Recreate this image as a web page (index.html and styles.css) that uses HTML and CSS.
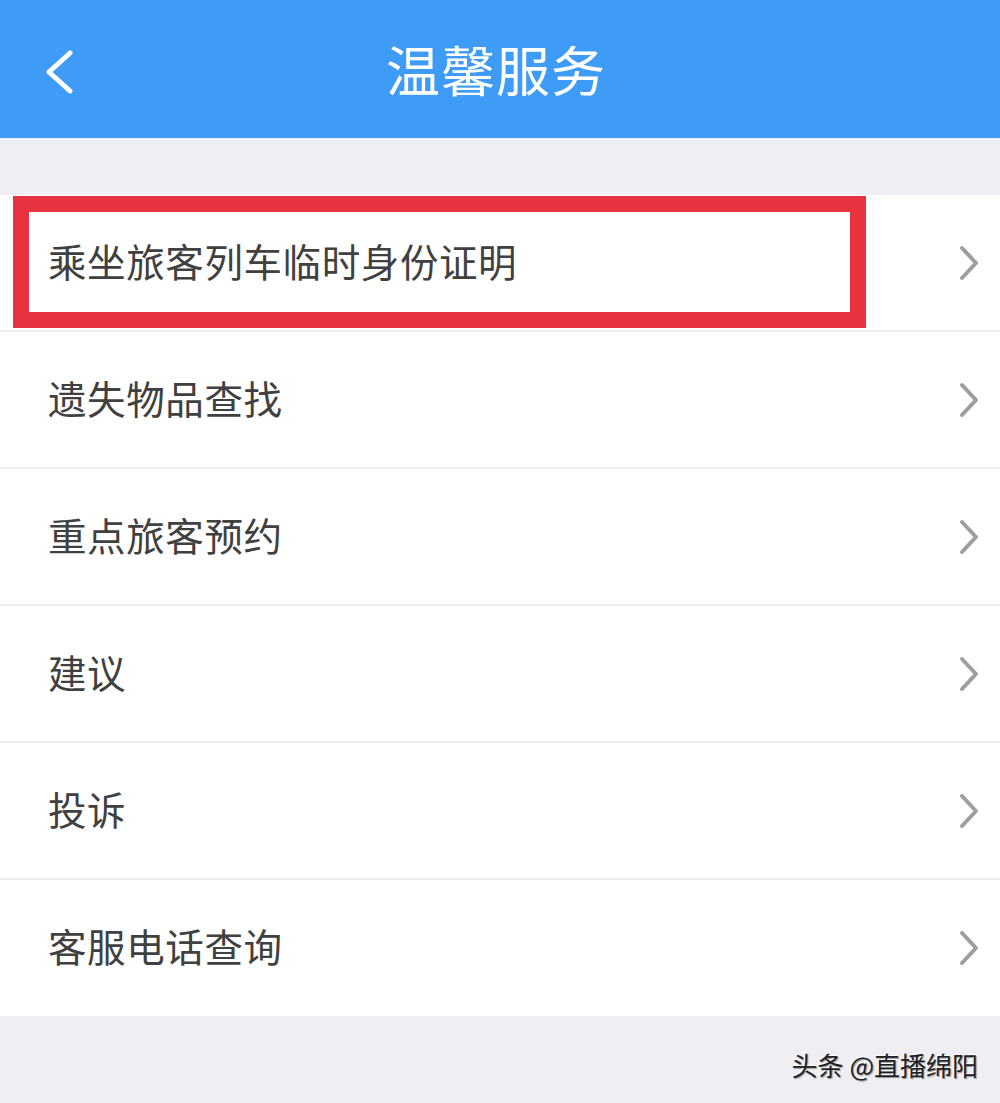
FILE: index.html
```html
<!DOCTYPE html>
<html lang="zh-CN">
<head>
<meta charset="utf-8">
<title>温馨服务</title>
<link rel="stylesheet" href="styles.css">
</head>
<body>
<div class="page">
  <header class="topbar">
    <svg class="back" viewBox="0 0 30 44" width="30" height="44" aria-hidden="true">
      <path d="M26 3 L5 22 L26 41" fill="none" stroke="#fff" stroke-width="5" stroke-linecap="round" stroke-linejoin="round"/>
    </svg>
    <h1 class="title">温馨服务</h1>
  </header>
  <div class="spacer"></div>
  <ul class="list">
    <li class="item item-highlight"><span class="label">乘坐旅客列车临时身份证明</span><svg class="chev" viewBox="0 0 24 38" width="24" height="38"><path d="M5 4 L19 19 L5 34" fill="none" stroke="#9e9e9e" stroke-width="4" stroke-linecap="round" stroke-linejoin="round"/></svg></li>
    <li class="item"><span class="label">遗失物品查找</span><svg class="chev" viewBox="0 0 24 38" width="24" height="38"><path d="M5 4 L19 19 L5 34" fill="none" stroke="#9e9e9e" stroke-width="4" stroke-linecap="round" stroke-linejoin="round"/></svg></li>
    <li class="item"><span class="label">重点旅客预约</span><svg class="chev" viewBox="0 0 24 38" width="24" height="38"><path d="M5 4 L19 19 L5 34" fill="none" stroke="#9e9e9e" stroke-width="4" stroke-linecap="round" stroke-linejoin="round"/></svg></li>
    <li class="item"><span class="label">建议</span><svg class="chev" viewBox="0 0 24 38" width="24" height="38"><path d="M5 4 L19 19 L5 34" fill="none" stroke="#9e9e9e" stroke-width="4" stroke-linecap="round" stroke-linejoin="round"/></svg></li>
    <li class="item"><span class="label">投诉</span><svg class="chev" viewBox="0 0 24 38" width="24" height="38"><path d="M5 4 L19 19 L5 34" fill="none" stroke="#9e9e9e" stroke-width="4" stroke-linecap="round" stroke-linejoin="round"/></svg></li>
    <li class="item item-last"><span class="label">客服电话查询</span><svg class="chev" viewBox="0 0 24 38" width="24" height="38"><path d="M5 4 L19 19 L5 34" fill="none" stroke="#9e9e9e" stroke-width="4" stroke-linecap="round" stroke-linejoin="round"/></svg></li>
  </ul>
  <footer class="footer">
    <span class="watermark">头条 @直播绵阳</span>
  </footer>
</div>
</body>
</html>
```

FILE: styles.css
```css
*, *::before, *::after { box-sizing: border-box; }
html, body { margin: 0; padding: 0; }
body {
  background: #eeeef3;
  font-family: "Noto Sans CJK SC", "Noto Sans", sans-serif;
  width: 1000px;
  height: 1103px;
  overflow: hidden;
}
.page { display: flex; flex-direction: column; height: 1103px; }
.topbar {
  position: relative;
  height: 138px;
  background: #3e9bf6;
  display: flex;
  align-items: center;
  justify-content: center;
  flex-shrink: 0;
}
.back {
  position: absolute;
  left: 44px;
  top: 50px;
}
.title {
  margin: 0 8px 0 0;
  font-size: 54px;
  font-weight: 400;
  color: #fff;
  letter-spacing: 1px;
  line-height: 1;
}
.spacer { height: 57px; flex-shrink: 0; }
.list {
  list-style: none;
  margin: 0;
  padding: 0;
  background: #fff;
}
.item {
  position: relative;
  height: 137px;
  display: flex;
  align-items: center;
  justify-content: space-between;
  padding: 0 19px 6px 48px;
  border-bottom: 2px solid #ececee;
}
.item-last { border-bottom: none; height: 136px; }
.item-highlight::before {
  content: "";
  position: absolute;
  left: 13px;
  top: 1px;
  width: 853px;
  height: 132px;
  border: 16px solid #e8323f;
}
.label {
  font-size: 38.5px;
  color: #404040;
  letter-spacing: 0.6px;
  position: relative;
}
.chev { flex-shrink: 0; margin-top: 6px; }
.footer {
  flex: 1;
  display: flex;
  justify-content: flex-end;
  align-items: flex-start;
  padding: 33px 22px 0 0;
}
.watermark {
  font-size: 26px;
  color: #222;
  text-shadow: -1px -1px 0 #fff, 1px 1px 1px rgba(0,0,0,0.4);
  line-height: 1.2;
}
```
